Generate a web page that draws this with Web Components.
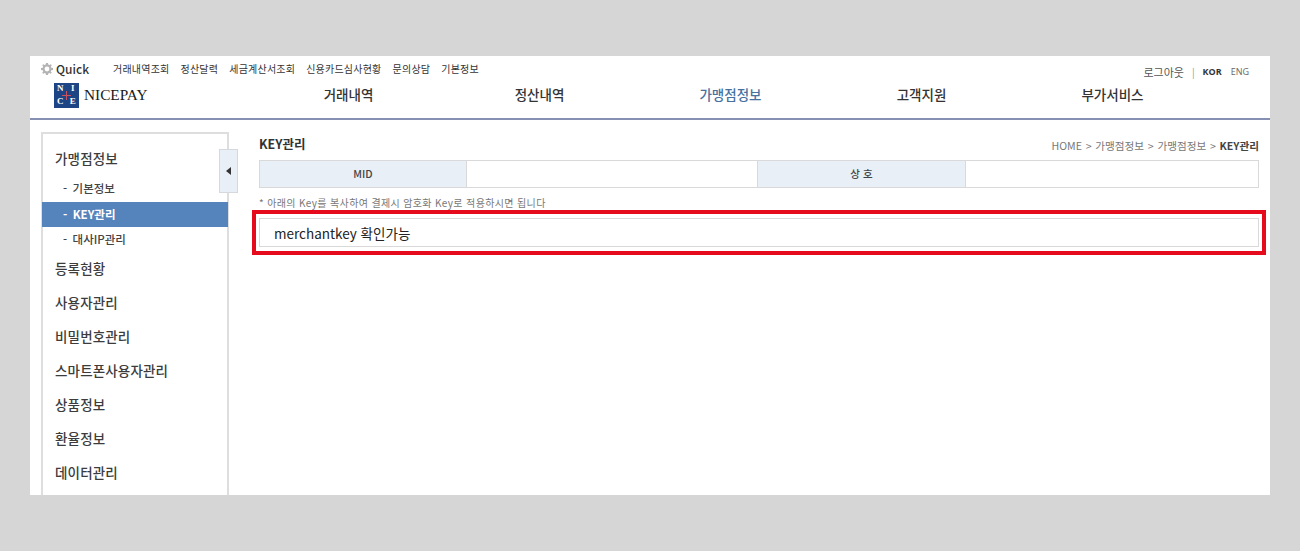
<!DOCTYPE html>
<html lang="ko">
<head>
<meta charset="utf-8">
<title>KEY관리</title>
<style>
  html, body { margin: 0; height: 100%; }
  body {
    background: #d6d6d6;
    font-family: "Noto Sans CJK KR", "Noto Sans", sans-serif;
    color: #333;
    overflow: hidden;
  }
  #stage {
    margin: 56px 30px 0;
    height: 439px;
    background: #fff;
    overflow: hidden;
  }
</style>
</head>
<body>
<div id="stage">
  <top-header></top-header>
  <page-body>
    <side-menu slot="side"></side-menu>
    <key-panel slot="main"></key-panel>
  </page-body>
</div>

<script>
class TopHeader extends HTMLElement {
  constructor() {
    super();
    this.attachShadow({ mode: "open" });
    const quick = ["거래내역조회", "정산달력", "세금계산서조회", "신용카드심사현황", "문의상담", "기본정보"];
    const menu = ["거래내역", "정산내역", "가맹점정보", "고객지원", "부가서비스"];

    this.shadowRoot.innerHTML = `
    <style>
      :host {
        display: block;
        height: 62px;
        border-bottom: 2px solid #8590b3;
      }

      /* 상단 줄 */
      .top {
        height: 26px;
        display: flex;
        align-items: flex-end;
        padding: 0 21px 5px 11px;
        box-sizing: border-box;
      }
      .quick {
        display: flex;
        align-items: center;
        gap: 3px;
        width: 72px;
        font-size: 12px;
        font-weight: 500;
        line-height: 16px;
        color: #333;
      }
      .links {
        display: flex;
        gap: 11px;
        font-size: 10px;
        line-height: 16px;
        letter-spacing: 0.22px;
        color: #333;
      }
      .util {
        margin-left: auto;
        display: flex;
        align-items: center;
        font-size: 11px;
        line-height: 16px;
        color: #555;
        position: relative;
        top: 3px;
      }
      .util .bar { margin: 0 8px; color: #999; font-size: 10px; }
      .util b { font-weight: 700; color: #333; margin-right: 9px; font-family: "Open Sans", sans-serif; font-size: 9px; }
      .util .eng { font-family: "Open Sans", sans-serif; font-size: 9px; color: #666; }

      /* 로고 + 메인 메뉴 */
      .main {
        display: flex;
        align-items: center;
        height: 26px;
        padding-left: 24px;
      }
      .logo {
        display: flex;
        align-items: center;
        gap: 5px;
        width: 199px;
        font-family: "Liberation Serif", serif;
        font-size: 15.3px;
        color: #1a1a1a;
      }
      .mark {
        width: 25px;
        height: 25px;
        background: #1d4484;
        display: grid;
        grid-template-columns: 1fr 1fr;
        grid-template-rows: 1fr 1fr;
        place-items: center;
        position: relative;
        font-size: 9px;
        font-weight: 700;
        line-height: 1;
        color: #fff;
      }
      .mark::before, .mark::after {
        content: "";
        position: absolute;
        background: #c9525e;
      }
      .mark::before { left: 8px; top: 12px; width: 9px; height: 1px; }
      .mark::after { left: 12px; top: 8px; width: 1px; height: 9px; }
      nav {
        display: grid;
        grid-template-columns: repeat(5, 191px);
        font-size: 13.5px;
        font-weight: 500;
        line-height: 26px;
        padding-bottom: 2px;
        color: #333;
        text-align: center;
      }
      nav .on { color: #47709f; }
    </style>

    <div class="top">
      <div class="quick">
        <svg width="12" height="12" viewBox="0 0 12 12">
          <path fill="#b4b4b4" d="M5 0h2l.3 1.6 1.1.5L9.8 1.2l1 1-1 1.4.5 1.1 1.7.3v2l-1.7.3-.5 1.1 1 1.4-1 1-1.4-.9-1.1.5L7 12H5l-.3-1.6-1.1-.5-1.4.9-1-1 1-1.4-.5-1.1L0 7V5l1.7-.3.5-1.1-1-1.4 1-1 1.4.9 1.1-.5z"/>
          <circle cx="6" cy="6" r="2.4" fill="#fff"/>
        </svg>
        <span>Quick</span>
      </div>
      <div class="links">${quick.map((t) => `<span>${t}</span>`).join("")}</div>
      <div class="util"><span>로그아웃</span><span class="bar">|</span><b>KOR</b><span class="eng">ENG</span></div>
    </div>
    <div class="main">
      <div class="logo">
        <div class="mark"><span>N</span><span>I</span><span>C</span><span>E</span></div>
        <span>NICEPAY</span>
      </div>
      <nav>${menu.map((t) => `<span class="${t === "가맹점정보" ? "on" : ""}">${t}</span>`).join("")}</nav>
    </div>
    `;
  }
}

class PageBody extends HTMLElement {
  constructor() {
    super();
    this.attachShadow({ mode: "open" });
    this.shadowRoot.innerHTML = `
    <style>
      :host {
        display: flex;
        padding: 12px 11px 0 11px;
      }
      .side { flex: 0 0 188px; }
      .main { flex: 1; min-width: 0; padding-left: 30px; }
    </style>
    <div class="side"><slot name="side"></slot></div>
    <div class="main"><slot name="main"></slot></div>
    `;
  }
}

class SideMenu extends HTMLElement {
  constructor() {
    super();
    this.attachShadow({ mode: "open" });
    const rest = ["등록현황", "사용자관리", "비밀번호관리", "스마트폰사용자관리", "상품정보", "환율정보", "데이터관리"];

    this.shadowRoot.innerHTML = `
    <style>
      :host {
        display: block;
        position: relative;
        box-sizing: border-box;
        height: 420px;
        border: 2px solid #dedede;
        border-bottom: 0;
      }
      .head, .item {
        font-size: 13.5px;
        font-weight: 500;
        letter-spacing: 0.15px;
        color: #3c3c3c;
        padding-left: 12px;
      }
      .head { line-height: 20px; padding-top: 14px; padding-bottom: 8px; }
      ul { margin: 0; padding: 0; list-style: none; }
      .sub li {
        height: 25.67px;
        line-height: 25.67px;
        padding-left: 20px;
        font-size: 11.5px;
        font-weight: 500;
        word-spacing: -0.5px;
        color: #444;
      }
      .sub li.on {
        margin: 0 -1px;
        padding-left: 21px;
        background: #5583bb;
        color: #fff;
        font-weight: 700;
      }
      .item { height: 34px; line-height: 34px; }
      .list { margin-top: -1.5px; }

      /* 접기 버튼: 메뉴 테두리 위에 걸침 */
      .toggle {
        position: absolute;
        left: 176px;
        top: 15px;
        width: 19px;
        height: 44px;
        box-sizing: border-box;
        background: #e8eff6;
        border: 1px solid #d5d9de;
        display: flex;
        align-items: center;
        justify-content: center;
      }
      .toggle i {
        border-style: solid;
        border-width: 4.5px 5px 4.5px 0;
        border-color: transparent #333 transparent transparent;
      }
    </style>
    <div class="head">가맹점정보</div>
    <ul class="sub">
      <li>- &nbsp;기본정보</li>
      <li class="on">- &nbsp;KEY관리</li>
      <li>- &nbsp;대사IP관리</li>
    </ul>
    <div class="list">${rest.map((t) => `<div class="item">${t}</div>`).join("")}</div>
    <div class="toggle"><i></i></div>
    `;
  }
}

class KeyPanel extends HTMLElement {
  constructor() {
    super();
    this.attachShadow({ mode: "open" });
    this.shadowRoot.innerHTML = `
    <style>
      :host { display: block; }
      .title {
        display: flex;
        justify-content: space-between;
        align-items: flex-end;
        height: 28px;
        padding-bottom: 7px;
        box-sizing: border-box;
      }
      h2 {
        margin: 0;
        font-size: 12.5px;
        font-weight: 700;
        line-height: 18px;
        color: #333;
      }
      .crumb {
        font-size: 10.6px;
        line-height: 14px;
        word-spacing: 0.8px;
        color: #777;
      }
      .crumb b { color: #444; font-weight: 700; }
      .info {
        display: grid;
        grid-template-columns: 206px 291px 208px 1fr;
        height: 28px;
        box-sizing: border-box;
        border: 1px solid #d9d9d9;
        font-size: 10.5px;
        font-weight: 500;
        line-height: 26px;
        color: #444;
        text-align: center;
      }
      .info .th { background: #e8eff6; }
      .info div + div { border-left: 1px solid #d9d9d9; }
      .note {
        font-size: 10px;
        line-height: 14px;
        color: #777;
        margin-top: 8px;
        letter-spacing: 0.36px;
      }
      .mark {
        margin: 0 -7px;
        border: 4px solid #e60b1c;
        padding: 4px 3px;
      }
      .field {
        height: 29px;
        box-sizing: border-box;
        border: 1px solid #d9d9d9;
        padding-left: 14px;
        font-size: 13.5px;
        line-height: 29px;
        color: #222;
      }
    </style>
    <div class="title">
      <h2>KEY관리</h2>
      <div class="crumb">HOME &gt; 가맹점정보 &gt; 가맹점정보 &gt; <b>KEY관리</b></div>
    </div>
    <div class="info">
      <div class="th">MID</div>
      <div></div>
      <div class="th">상 호</div>
      <div></div>
    </div>
    <div class="note">* 아래의 Key를 복사하여 결제시 암호화 Key로 적용하시면 됩니다</div>
    <div class="mark"><div class="field">merchantkey 확인가능</div></div>
    `;
  }
}

customElements.define("top-header", TopHeader);
customElements.define("page-body", PageBody);
customElements.define("side-menu", SideMenu);
customElements.define("key-panel", KeyPanel);
</script>
</body>
</html>
